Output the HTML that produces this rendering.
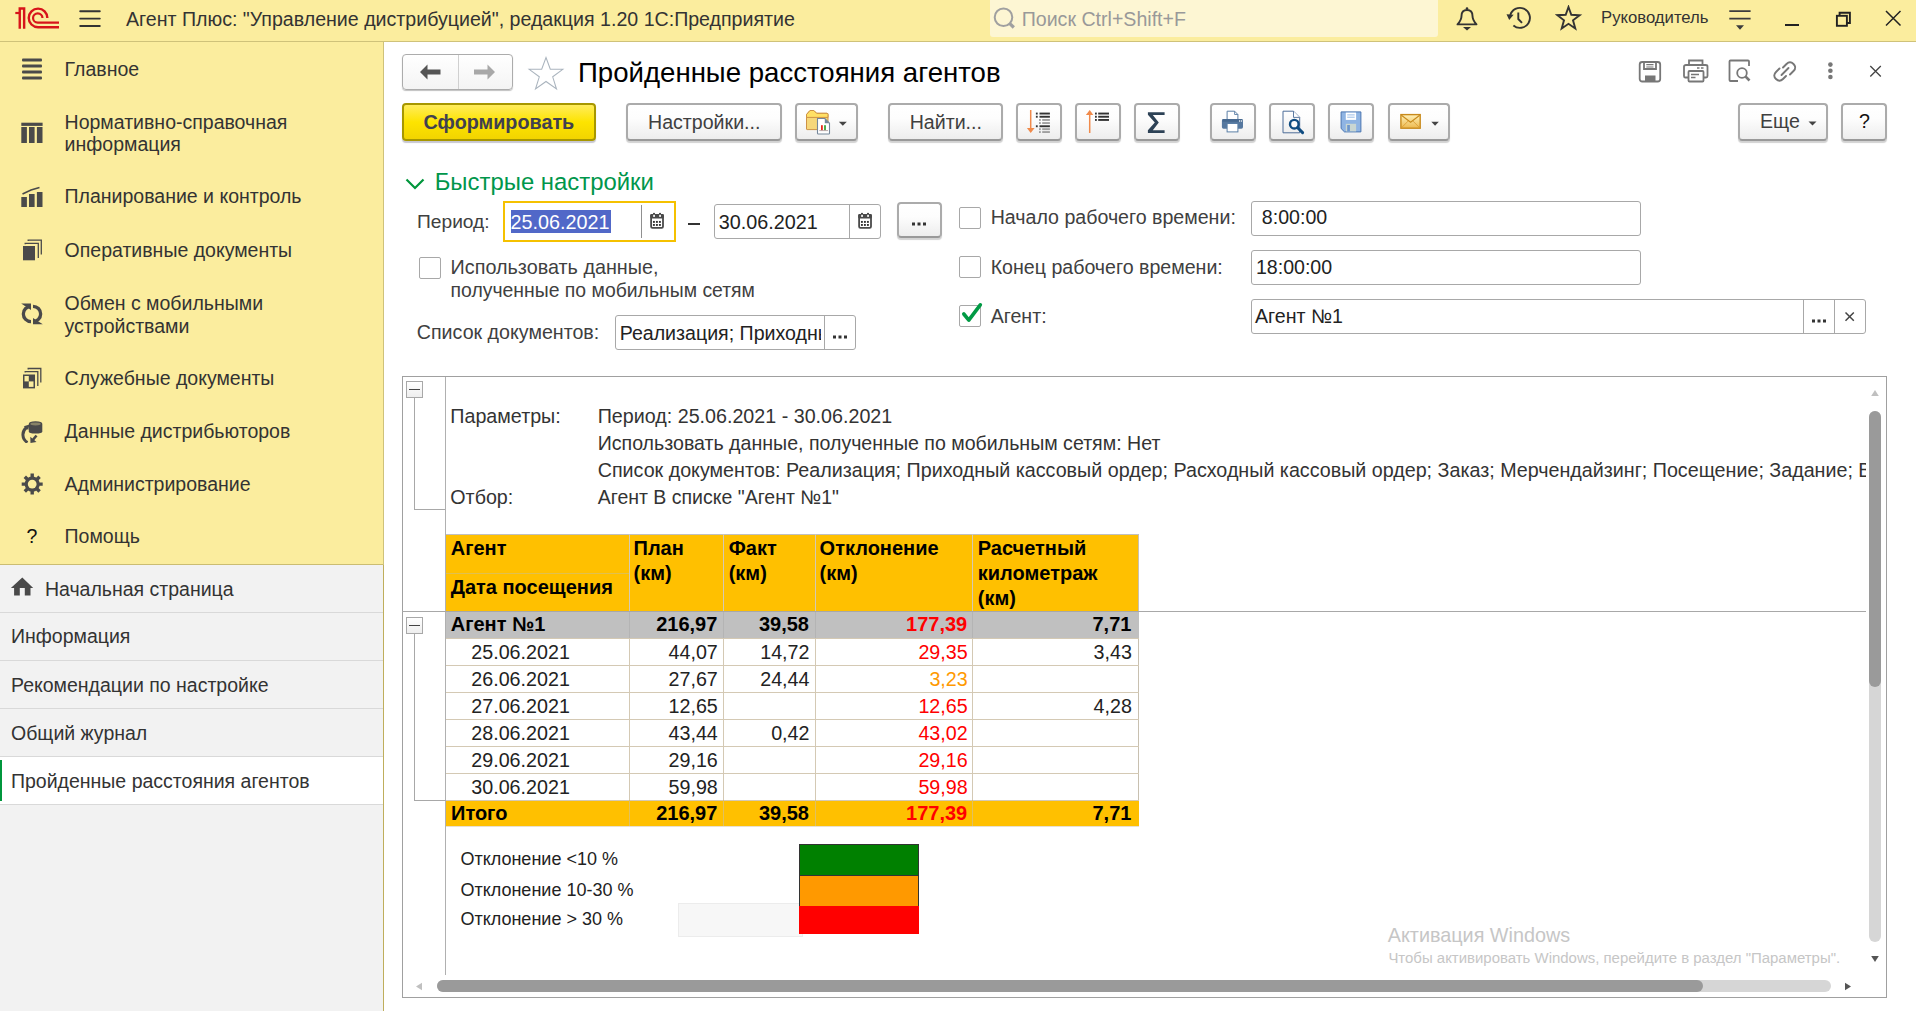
<!DOCTYPE html>
<html><head><meta charset="utf-8"><title>1C</title>
<style>
html,body{margin:0;padding:0;width:1916px;height:1011px;overflow:hidden;background:#fff;font-family:"Liberation Sans",sans-serif;}
.t{position:absolute;white-space:nowrap;}
.r{position:absolute;}
</style></head><body>
<div class="r" style="left:0px;top:0px;width:1916px;height:41px;background:#fbed9e"></div>
<div class="r" style="left:0px;top:41px;width:1916px;height:1px;background:#cfc27a"></div>
<svg class="r" style="left:12px;top:4px;" width="50" height="28" viewBox="0 0 50 28">
<g fill="none" stroke="#d7141a" stroke-width="2.4">
<path d="M7.75 24.8 V4.5 H12.15 V24.8" stroke-linejoin="miter"/>
<path d="M3.3 9 H7.75" stroke-width="2.2"/>
<path d="M35.35 13.95 A9.3 9.3 0 1 0 26.05 23.25 H47"/>
<path d="M30.45 14 A4.7 4.7 0 1 0 25.75 18.7 H47" stroke-width="2.2"/>
</g></svg>
<svg class="r" style="left:78px;top:9px;" width="24" height="20" viewBox="0 0 24 20"><g stroke="#333" stroke-width="1.9" stroke-linecap="round"><path d="M2.2 2.3H21.8M2.2 9.6H21.8M2.2 17H21.8"/></g></svg>
<div class="t" style="left:126.00px;top:7.84px;font-size:19.6px;line-height:22.54px;color:#333;font-weight:normal;">Агент Плюс: "Управление дистрибуцией", редакция 1.20 1С:Предприятие</div>
<div class="r" style="left:990px;top:0px;width:448px;height:37px;background:#fdf6d3;border-radius:0 0 3px 3px"></div>
<svg class="r" style="left:992px;top:6px;" width="26" height="26" viewBox="0 0 26 26"><g fill="none" stroke="#a0a0a0" stroke-width="2"><circle cx="11.5" cy="11.2" r="8.8"/></g><path d="M17.6 17.3 L21.8 21.5" stroke="#a0a0a0" stroke-width="3.2"/></svg>
<div class="t" style="left:1021.70px;top:7.74px;font-size:19.6px;line-height:22.54px;color:#999;font-weight:normal;">Поиск Ctrl+Shift+F</div>
<svg class="r" style="left:1454px;top:5px;" width="26" height="28" viewBox="0 0 26 28"><g fill="none" stroke="#333" stroke-width="1.9" stroke-linejoin="round">
<path d="M3.5 19.4 Q7.5 15 7.5 11 Q7.5 5 13 5 Q18.5 5 18.5 11 Q18.5 15 22.5 19.4 Z"/></g>
<circle cx="13" cy="3.5" r="1.3" fill="#333"/><path d="M9 22 H17 L13 25.5 Z" fill="#333"/></svg>
<svg class="r" style="left:1505px;top:5px;" width="28" height="28" viewBox="0 0 28 28"><g fill="none" stroke="#333" stroke-width="1.9"><path d="M8.4 20.5 A10 10 0 1 0 5.2 10.5"/><path d="M13.3 7.5 V14 L17 17.8"/></g>
<path d="M1.5 9.2 L8.6 9.8 L4.2 15 Z" fill="#333"/></svg>
<svg class="r" style="left:1555px;top:5px;" width="28" height="28" viewBox="0 0 28 28"><path d="M13.5 2 L16.3 9.8 L24.6 10.2 L18 15.3 L20.3 23.5 L13.5 18.8 L6.7 23.5 L9 15.3 L2.4 10.2 L10.7 9.8 Z" fill="none" stroke="#333" stroke-width="1.9" stroke-linejoin="miter"/></svg>
<div class="t" style="left:1601.00px;top:7.71px;font-size:16.7px;line-height:19.20px;color:#333;font-weight:normal;">Руководитель</div>
<svg class="r" style="left:1726px;top:8px;" width="28" height="24" viewBox="0 0 28 24"><g stroke="#3c3c3c" stroke-width="1.6"><path d="M3.3 3.1H24.6M3.3 10.6H24.6"/></g><path d="M10 17.3H18L14 21.7Z" fill="#3c3c3c"/></svg>
<div class="r" style="left:1785px;top:24px;width:14px;height:2px;background:#222"></div>
<svg class="r" style="left:1834px;top:10px;" width="20" height="20" viewBox="0 0 20 20"><g fill="none" stroke="#222" stroke-width="1.9"><rect x="2.9" y="5.8" width="10" height="10"/><path d="M5.6 5.8 V2.8 H15.9 V13 H12.9"/></g></svg>
<svg class="r" style="left:1884px;top:9px;" width="18" height="18" viewBox="0 0 18 18"><path d="M2 2 L16.5 16.5 M16.5 2 L2 16.5" stroke="#222" stroke-width="1.5"/></svg>
<div class="r" style="left:0px;top:42px;width:383px;height:522px;background:#fbed9e"></div>
<div class="r" style="left:383px;top:42px;width:1px;height:523px;background:#cfc27a"></div>
<div class="r" style="left:383px;top:565px;width:1px;height:446px;background:#bfae5c"></div>
<div class="r" style="left:0px;top:564px;width:383px;height:1px;background:#cbbd72"></div>
<div class="r" style="left:0px;top:565px;width:383px;height:446px;background:#f2f2f2"></div>
<svg class="r" style="left:20px;top:56px;" width="24" height="24" viewBox="0 0 24 24"><g fill="#4a4a4a"><rect x="2" y="2.5" width="20" height="3" rx="1"/><rect x="2" y="8.5" width="20" height="3" rx="1"/><rect x="2" y="14.5" width="20" height="3" rx="1"/><rect x="2" y="20.5" width="20" height="3" rx="1"/></g></svg>
<div class="t" style="left:64.60px;top:57.93px;font-size:19.5px;line-height:22.42px;color:#333;font-weight:normal;">Главное</div>
<svg class="r" style="left:20px;top:121px;" width="24" height="24" viewBox="0 0 24 24"><g fill="#4a4a4a"><rect x="1.3" y="1.7" width="21.3" height="3.2"/><rect x="1.3" y="6" width="5.6" height="16"/><rect x="9" y="6" width="5.6" height="16"/><rect x="16.9" y="6" width="5.6" height="16"/></g></svg>
<div class="t" style="left:64.60px;top:111.03px;font-size:19.5px;line-height:22.42px;color:#333;font-weight:normal;">Нормативно-справочная</div>
<div class="t" style="left:64.60px;top:133.03px;font-size:19.5px;line-height:22.42px;color:#333;font-weight:normal;">информация</div>
<svg class="r" style="left:20px;top:185px;" width="24" height="24" viewBox="0 0 24 24"><g fill="#4a4a4a"><rect x="1.3" y="12" width="5.6" height="10"/><rect x="9" y="9" width="5.6" height="13"/><rect x="16.9" y="7" width="5.6" height="15"/></g><path d="M2.5 9 L11 5 L19.5 2.5" stroke="#4a4a4a" stroke-width="1.6" fill="none"/></svg>
<div class="t" style="left:64.60px;top:185.33px;font-size:19.5px;line-height:22.42px;color:#333;font-weight:normal;">Планирование и контроль</div>
<svg class="r" style="left:20px;top:238px;" width="24" height="24" viewBox="0 0 24 24"><g fill="#4a4a4a"><rect x="3" y="8" width="12" height="14.3"/></g><g fill="none" stroke="#4a4a4a" stroke-width="1.3"><path d="M5.2 6.2 V5.3 H18.3 V20"/><path d="M8.2 3 V2.1 H21.3 V16.5"/></g></svg>
<div class="t" style="left:64.60px;top:239.03px;font-size:19.5px;line-height:22.42px;color:#333;font-weight:normal;">Оперативные документы</div>
<svg class="r" style="left:20px;top:302px;" width="24" height="24" viewBox="0 0 24 24"><g fill="none" stroke="#4a4a4a" stroke-width="3.3"><path d="M11 4.3 A7.6 7.6 0 0 0 11 19.6"/><path d="M13 19.6 A7.6 7.6 0 0 0 13 4.3"/></g><path d="M1.2 1.6 L11 1.6 L11 8 Z M22.8 22.3 L13 22.3 L13 16 Z" fill="#4a4a4a"/></svg>
<div class="t" style="left:64.60px;top:292.03px;font-size:19.5px;line-height:22.42px;color:#333;font-weight:normal;">Обмен с мобильными</div>
<div class="t" style="left:64.60px;top:314.63px;font-size:19.5px;line-height:22.42px;color:#333;font-weight:normal;">устройствами</div>
<svg class="r" style="left:20px;top:366px;" width="24" height="24" viewBox="0 0 24 24"><g fill="#4a4a4a"><rect x="3" y="8.5" width="12" height="13.9"/></g><g fill="#fbed9e"><rect x="4.5" y="10" width="4.3" height="5.4"/><rect x="8.8" y="15.4" width="4.7" height="5.5"/></g><g fill="none" stroke="#4a4a4a" stroke-width="1.3"><path d="M5.2 6.6 V5.7 H17.8 V20"/><path d="M8.2 3.4 V2.5 H20.8 V16.5"/></g></svg>
<div class="t" style="left:64.60px;top:366.73px;font-size:19.5px;line-height:22.42px;color:#333;font-weight:normal;">Служебные документы</div>
<svg class="r" style="left:18px;top:419px;" width="26" height="24" viewBox="0 0 26 24"><g fill="#4a4a4a"><path d="M10.8 5 Q10.8 2.2 17.5 2.2 Q24.3 2.2 24.3 5 V12.5 Q24.3 14.5 17.5 14.5 Q10.8 14.5 10.8 12.5 Z"/></g><ellipse cx="17.5" cy="5" rx="5.2" ry="1.4" fill="#fbed9e" opacity=".35"/><path d="M8.5 8.5 A9 9 0 0 0 9.5 23.5" stroke="#4a4a4a" stroke-width="3" fill="none"/><path d="M5.8 7.2 L11.5 5.5 L10.2 11 Z" fill="#4a4a4a"/><path d="M18.5 16.5 L14 22" stroke="#4a4a4a" stroke-width="2.6"/><path d="M12.3 17.8 L12.5 24 L18.5 23 Z" fill="#4a4a4a"/></svg>
<div class="t" style="left:64.60px;top:419.83px;font-size:19.5px;line-height:22.42px;color:#333;font-weight:normal;">Данные дистрибьюторов</div>
<svg class="r" style="left:20px;top:472px;" width="24" height="24" viewBox="0 0 24 24"><g stroke="#4a4a4a" stroke-width="3.4"><path d="M12.2 1.6V22.6M1.7 12.1H22.7M4.8 4.7L19.6 19.5M19.6 4.7L4.8 19.5"/></g><circle cx="12.2" cy="12.1" r="7.6" fill="#4a4a4a"/><circle cx="12.2" cy="12.1" r="4.4" fill="#fbed9e"/></svg>
<div class="t" style="left:64.60px;top:472.63px;font-size:19.5px;line-height:22.42px;color:#333;font-weight:normal;">Администрирование</div>
<div class="t" style="left:26.50px;top:525.43px;font-size:19.5px;line-height:22.42px;color:#111;font-weight:normal;">?</div>
<div class="t" style="left:64.60px;top:525.43px;font-size:19.5px;line-height:22.42px;color:#333;font-weight:normal;">Помощь</div>
<svg class="r" style="left:10px;top:574px;" width="24" height="24" viewBox="0 0 24 24"><path d="M12.3 3.6 L23.2 13.9 H20.5 V21.4 H14.8 V13.9 H9.8 V21.4 H4.1 V13.9 H0.9 Z" fill="#4a4a4a"/></svg>
<div class="t" style="left:44.90px;top:577.73px;font-size:19.5px;line-height:22.42px;color:#333;font-weight:normal;">Начальная страница</div>
<div class="r" style="left:0px;top:612px;width:383px;height:1px;background:#d9d9d9"></div>
<div class="t" style="left:11.00px;top:625.43px;font-size:19.5px;line-height:22.42px;color:#333;font-weight:normal;">Информация</div>
<div class="r" style="left:0px;top:660px;width:383px;height:1px;background:#d9d9d9"></div>
<div class="t" style="left:11.00px;top:673.73px;font-size:19.5px;line-height:22.42px;color:#333;font-weight:normal;">Рекомендации по настройке</div>
<div class="r" style="left:0px;top:708px;width:383px;height:1px;background:#d9d9d9"></div>
<div class="t" style="left:11.00px;top:721.83px;font-size:19.5px;line-height:22.42px;color:#333;font-weight:normal;">Общий журнал</div>
<div class="r" style="left:0px;top:756px;width:383px;height:1px;background:#d9d9d9"></div>
<div class="r" style="left:0px;top:757px;width:383px;height:47px;background:#fff"></div>
<div class="r" style="left:0px;top:760px;width:2px;height:41px;background:#00963c"></div>
<div class="t" style="left:11.00px;top:769.93px;font-size:19.5px;line-height:22.42px;color:#333;font-weight:normal;">Пройденные расстояния агентов</div>
<div class="r" style="left:0px;top:804px;width:383px;height:1px;background:#d9d9d9"></div>
<div class="r" style="left:402px;top:54px;width:111px;height:36px;border:1px solid #acacac;border-radius:4px;box-sizing:border-box;background:linear-gradient(#fff,#f4f4f4);box-shadow:0 1px 1px #c0c0c0"></div>
<div class="r" style="left:458px;top:55px;width:1px;height:34px;background:#d0d0d0"></div>
<svg class="r" style="left:418px;top:62px;" width="26" height="20" viewBox="0 0 26 20"><path d="M2 10 L9.5 2.5 L9.5 7.5 L22.5 7.5 L22.5 12.5 L9.5 12.5 L9.5 17.5 Z" fill="#555"/></svg>
<svg class="r" style="left:471px;top:62px;" width="26" height="20" viewBox="0 0 26 20"><path d="M24 10 L16.5 2.5 L16.5 7.5 L3 7.5 L3 12.5 L16.5 12.5 L16.5 17.5 Z" fill="#a8a8a8"/></svg>
<svg class="r" style="left:526px;top:55px;" width="40" height="36" viewBox="0 0 40 36"><path d="M20 2.5 L24.3 14.3 L36.8 14.3 L26.7 21.8 L30.5 34 L20 26.5 L9.5 34 L13.3 21.8 L3.2 14.3 L15.7 14.3 Z" fill="none" stroke="#aab4be" stroke-width="1.05"/></svg>
<div class="t" style="left:578.00px;top:56.57px;font-size:27.6px;line-height:31.74px;color:#000;font-weight:normal;">Пройденные расстояния агентов</div>
<svg class="r" style="left:1637px;top:59px;" width="26" height="25" viewBox="0 0 26 25"><g fill="none" stroke="#777" stroke-width="1.8"><rect x="2.7" y="3" width="20.5" height="19.5" rx="2.5"/><path d="M7 3 V10 H19 V3"/><path d="M9.3 5.6H16.5M9.3 8H16.5" stroke-width="1.2"/></g><rect x="8" y="16.5" width="10.5" height="6" fill="#777"/></svg>
<svg class="r" style="left:1682px;top:58px;" width="28" height="26" viewBox="0 0 28 26"><g fill="none" stroke="#777" stroke-width="1.8"><path d="M7 7 V2.5 H20.5 V7"/><path d="M6 19.5 H3 Q2 19.5 2 18 V8.5 Q2 7 4 7 H23.5 Q25.5 7 25.5 8.5 V18 Q25.5 19.5 24 19.5 H21.5"/><rect x="6.5" y="13" width="15" height="10.5" rx="1"/></g><path d="M9 16.5H17M9 19.5H13.5" stroke="#777" stroke-width="1.3"/><path d="M15 10H17.5M19 10H21.5" stroke="#777" stroke-width="1.3"/></svg>
<svg class="r" style="left:1727px;top:58px;" width="28" height="26" viewBox="0 0 28 26"><g fill="none" stroke="#777" stroke-width="1.8"><path d="M11 23 H3.5 Q2.5 23 2.5 22 V3.5 Q2.5 2.5 3.5 2.5 H21 Q22 2.5 22 3.5 V8"/><circle cx="15" cy="15" r="4.8"/></g><path d="M18.4 18.4 L22.5 22.5" stroke="#777" stroke-width="2.6"/></svg>
<svg class="r" style="left:1772px;top:58px;" width="28" height="26" viewBox="0 0 28 26"><g fill="none" stroke="#777" stroke-width="1.9" stroke-linecap="round"><path d="M11 9.5 L14.5 6 Q18 2.5 21.5 6 Q25 9.5 21.5 13 L18 16.5"/><path d="M14 18 L11 21 Q7.5 24.5 4 21 Q0.5 17.5 4 14 L7.5 10.5"/><path d="M9.5 17 L16.5 10"/></g></svg>
<svg class="r" style="left:1826px;top:60px;" width="10" height="22" viewBox="0 0 10 22"><g fill="#777"><circle cx="4.4" cy="4.6" r="2.3"/><circle cx="4.4" cy="10.8" r="2.3"/><circle cx="4.4" cy="17" r="2.3"/></g></svg>
<svg class="r" style="left:1868px;top:64px;" width="16" height="16" viewBox="0 0 16 16"><path d="M2.3 2 L12.8 12.5 M12.8 2 L2.3 12.5" stroke="#444" stroke-width="1.3"/></svg>
<div class="r" style="left:402px;top:103px;width:194px;height:38px;border:2px solid #a79700;border-radius:4px;box-sizing:border-box;background:linear-gradient(#ffec5c 0%,#fde400 50%,#f2d400 100%);box-shadow:0 2px 1px 0 #c7c7d0"></div>
<div class="t" style="left:423.60px;top:110.65px;font-size:19.8px;line-height:22.77px;color:#404050;font-weight:bold;">Сформировать</div>
<div class="r" style="left:626px;top:103px;width:156px;height:38px;border:2px solid #ababab;border-bottom-color:#999;border-radius:4px;box-sizing:border-box;background:linear-gradient(#ffffff 0%,#fdfdfd 40%,#ededed 100%);box-shadow:0 2px 1px 0 #d2d2d2;"></div>
<div class="t" style="left:648.00px;top:110.54px;font-size:19.6px;line-height:22.54px;color:#404040;font-weight:normal;">Настройки...</div>
<div class="r" style="left:795px;top:103px;width:63px;height:38px;border:2px solid #ababab;border-bottom-color:#999;border-radius:4px;box-sizing:border-box;background:linear-gradient(#ffffff 0%,#fdfdfd 40%,#ededed 100%);box-shadow:0 2px 1px 0 #d2d2d2;"></div>
<svg class="r" style="left:795px;top:100px;" width="40" height="40" viewBox="0 0 40 40"><path d="M11.5 14.5 L15 10.5 H18.8 L21.6 13.3 H32 Q33 13.3 33 14.5 V29 Q33 29.6 32.4 29.6 H12.1 Q11.5 29.6 11.5 29 Z" fill="#f6d77a" stroke="#cd9245" stroke-width="1"/><path d="M11.5 14.5 L15 10.5 H18.8 L21.6 13.3 H32 Q33 13.3 33 14.5 V17.4 H11.5 Z" fill="#ffe066" stroke="#cd9245" stroke-width="1"/><path d="M22.5 18.5 H29.8 L34.5 23.2 V33.2 Q34.5 34 33.7 34 H23.3 Q22.5 34 22.5 33.2 Z" fill="#fff" stroke="#75879a" stroke-width="1.1"/><path d="M29.8 18.5 V23.2 H34.5 Z" fill="#75879a"/><rect x="26" y="25.2" width="1.8" height="5" fill="#e8291c"/><rect x="29.1" y="25.2" width="1.8" height="5" fill="#3aa53a"/><path d="M24.3 30.6 H33" stroke="#a08888" stroke-width=".7"/></svg>
<svg class="r" style="left:838px;top:121px;" width="10" height="6" viewBox="0 0 10 6"><path d="M0.8 0.8 H8.8 L4.8 4.8 Z" fill="#444"/></svg>
<div class="r" style="left:888px;top:103px;width:115px;height:38px;border:2px solid #ababab;border-bottom-color:#999;border-radius:4px;box-sizing:border-box;background:linear-gradient(#ffffff 0%,#fdfdfd 40%,#ededed 100%);box-shadow:0 2px 1px 0 #d2d2d2;"></div>
<div class="t" style="left:909.70px;top:110.54px;font-size:19.6px;line-height:22.54px;color:#404040;font-weight:normal;">Найти...</div>
<div class="r" style="left:1016px;top:103px;width:46px;height:38px;border:2px solid #ababab;border-bottom-color:#999;border-radius:4px;box-sizing:border-box;background:linear-gradient(#ffffff 0%,#fdfdfd 40%,#ededed 100%);box-shadow:0 2px 1px 0 #d2d2d2;"></div>
<svg class="r" style="left:1016px;top:100px;" width="46" height="40" viewBox="0 0 46 40"><path d="M14.7 10 V29" stroke="#f08a4b" stroke-width="1.5"/><path d="M10.9 28 H18.6 L14.7 33 Z" fill="#f08a4b"/><rect x="19.9" y="12.6" width="1.8" height="1.9" fill="#333"/><rect x="23.5" y="12.6" width="10.4" height="1.9" fill="#333"/><rect x="19.9" y="15.8" width="1.8" height="1.9" fill="#333"/><rect x="23.5" y="15.8" width="10.4" height="1.9" fill="#333"/><rect x="19.9" y="25.3" width="1.8" height="1.9" fill="#333"/><rect x="23.5" y="25.3" width="10.4" height="1.9" fill="#333"/><rect x="23" y="19.0" width="1.8" height="1.9" fill="#a0a0a0"/><rect x="26.2" y="19.0" width="7.7" height="1.9" fill="#a0a0a0"/><rect x="23" y="22.1" width="1.8" height="1.9" fill="#a0a0a0"/><rect x="26.2" y="22.1" width="7.7" height="1.9" fill="#a0a0a0"/><rect x="23" y="28.2" width="1.8" height="1.9" fill="#a0a0a0"/><rect x="26.2" y="28.2" width="7.7" height="1.9" fill="#a0a0a0"/><rect x="23" y="31.1" width="1.8" height="1.9" fill="#a0a0a0"/><rect x="26.2" y="31.1" width="7.7" height="1.9" fill="#a0a0a0"/></svg>
<div class="r" style="left:1075px;top:103px;width:46px;height:38px;border:2px solid #ababab;border-bottom-color:#999;border-radius:4px;box-sizing:border-box;background:linear-gradient(#ffffff 0%,#fdfdfd 40%,#ededed 100%);box-shadow:0 2px 1px 0 #d2d2d2;"></div>
<svg class="r" style="left:1075px;top:100px;" width="46" height="40" viewBox="0 0 46 40"><path d="M14.7 13 V33" stroke="#f08a4b" stroke-width="1.5"/><path d="M10.9 15 H18.4 L14.7 9.9 Z" fill="#f08a4b"/><rect x="20" y="12.6" width="1.8" height="1.9" fill="#333"/><rect x="23.2" y="12.6" width="10.8" height="1.9" fill="#333"/><rect x="20" y="15.8" width="1.8" height="1.9" fill="#333"/><rect x="23.2" y="15.8" width="10.8" height="1.9" fill="#333"/><rect x="20" y="19.0" width="1.8" height="1.9" fill="#333"/><rect x="23.2" y="19.0" width="10.8" height="1.9" fill="#333"/></svg>
<div class="r" style="left:1134px;top:103px;width:46px;height:38px;border:2px solid #ababab;border-bottom-color:#999;border-radius:4px;box-sizing:border-box;background:linear-gradient(#ffffff 0%,#fdfdfd 40%,#ededed 100%);box-shadow:0 2px 1px 0 #d2d2d2;"></div>
<svg class="r" style="left:1134px;top:100px;" width="46" height="40" viewBox="0 0 46 40"><path d="M13.9 12.2 H30.6 V15 H18.8 L24.8 22.6 L18.8 30.2 H30.6 V33 H13.9 V30.3 L20.8 22.6 L13.9 14.8 Z" fill="#2d4256"/></svg>
<div class="r" style="left:1210px;top:103px;width:46px;height:38px;border:2px solid #ababab;border-bottom-color:#999;border-radius:4px;box-sizing:border-box;background:linear-gradient(#ffffff 0%,#fdfdfd 40%,#ededed 100%);box-shadow:0 2px 1px 0 #d2d2d2;"></div>
<svg class="r" style="left:1210px;top:100px;" width="46" height="40" viewBox="0 0 46 40"><path d="M17.1 19.5 V11.2 H24.6 L27.9 14.5 V19.5" fill="#fff" stroke="#5b7fa6" stroke-width="1"/><path d="M24.6 11.2 V14.5 H27.9" fill="none" stroke="#5b7fa6" stroke-width=".9"/><rect x="11.9" y="19.1" width="21.1" height="9.6" rx="1.6" fill="#56789f"/><rect x="12.5" y="19.1" width="19.9" height="2.6" fill="#46688f"/><rect x="17.1" y="23.5" width="10.8" height="8.4" fill="#fff" stroke="#5b7fa6" stroke-width="1"/><circle cx="29.6" cy="20.9" r=".75" fill="#fff"/><circle cx="31.5" cy="20.9" r=".75" fill="#fff"/></svg>
<div class="r" style="left:1269px;top:103px;width:46px;height:38px;border:2px solid #ababab;border-bottom-color:#999;border-radius:4px;box-sizing:border-box;background:linear-gradient(#ffffff 0%,#fdfdfd 40%,#ededed 100%);box-shadow:0 2px 1px 0 #d2d2d2;"></div>
<svg class="r" style="left:1269px;top:100px;" width="46" height="40" viewBox="0 0 46 40"><defs><linearGradient id="pg" x1="0" y1="0" x2="0" y2="1"><stop offset="0" stop-color="#fff"/><stop offset="1" stop-color="#eee"/></linearGradient></defs><path d="M14 11.2 H24.5 L30.7 17.4 V32.8 H14 Z" fill="url(#pg)" stroke="#4d6d98" stroke-width="1"/><path d="M24.5 11.2 V17.4 H30.7" fill="#fff" stroke="#4d6d98" stroke-width=".9"/><circle cx="25.3" cy="24.2" r="4.3" fill="#fff" fill-opacity=".6" stroke="#0f4c81" stroke-width="2.4"/><path d="M28.7 27.8 L33.6 32.6" stroke="#0f4c81" stroke-width="3" stroke-linecap="round"/></svg>
<div class="r" style="left:1328px;top:103px;width:46px;height:38px;border:2px solid #ababab;border-bottom-color:#999;border-radius:4px;box-sizing:border-box;background:linear-gradient(#ffffff 0%,#fdfdfd 40%,#ededed 100%);box-shadow:0 2px 1px 0 #d2d2d2;"></div>
<svg class="r" style="left:1328px;top:100px;" width="46" height="40" viewBox="0 0 46 40"><path d="M13.1 11.9 H32.9 V31.9 H16.5 L13.1 28.5 Z" fill="#8fb4e3" stroke="#4a76b0" stroke-width="1"/><rect x="17.8" y="12.6" width="10.3" height="7.3" fill="#fff"/><path d="M19.2 14.9 H26.7 M19.2 17.2 H26.7" stroke="#8fb4e3" stroke-width=".9"/><rect x="17.8" y="23.8" width="10.3" height="7.6" fill="#c9d6d2"/><rect x="19.2" y="25" width="2.7" height="6.4" fill="#6d96cc"/></svg>
<div class="r" style="left:1388px;top:103px;width:62px;height:38px;border:2px solid #ababab;border-bottom-color:#999;border-radius:4px;box-sizing:border-box;background:linear-gradient(#ffffff 0%,#fdfdfd 40%,#ededed 100%);box-shadow:0 2px 1px 0 #d2d2d2;"></div>
<svg class="r" style="left:1388px;top:100px;" width="46" height="40" viewBox="0 0 46 40"><defs><linearGradient id="mg" x1="0" y1="0" x2="0" y2="1"><stop offset="0" stop-color="#fff1b8"/><stop offset="1" stop-color="#ecb94f"/></linearGradient></defs><rect x="12.9" y="14.6" width="19.3" height="13.6" fill="url(#mg)" stroke="#c88a1c" stroke-width="1.4"/><path d="M13.4 15.2 L22.6 22.2 L31.7 15.2" fill="none" stroke="#c88a1c" stroke-width="1.1"/><path d="M13.4 27.8 L20.2 21 M31.7 27.8 L24.9 21" stroke="#d99a30" stroke-width=".8"/></svg>
<svg class="r" style="left:1431px;top:121px;" width="9" height="6" viewBox="0 0 9 6"><path d="M0.3 0.8 H7.8 L4.05 4.8 Z" fill="#444"/></svg>
<div class="r" style="left:1738px;top:103px;width:90px;height:38px;border:2px solid #ababab;border-bottom-color:#999;border-radius:4px;box-sizing:border-box;background:linear-gradient(#ffffff 0%,#fdfdfd 40%,#ededed 100%);box-shadow:0 2px 1px 0 #d2d2d2;"></div>
<div class="t" style="left:1760.00px;top:109.94px;font-size:19.6px;line-height:22.54px;color:#404040;font-weight:normal;">Еще</div>
<svg class="r" style="left:1807px;top:120px;" width="12" height="8" viewBox="0 0 12 8"><path d="M1.5 1.5 H9.5 L5.5 5.5 Z" fill="#444"/></svg>
<div class="r" style="left:1841px;top:103px;width:46px;height:38px;border:2px solid #ababab;border-bottom-color:#999;border-radius:4px;box-sizing:border-box;background:linear-gradient(#ffffff 0%,#fdfdfd 40%,#ededed 100%);box-shadow:0 2px 1px 0 #d2d2d2;"></div>
<div class="t" style="left:1859.00px;top:110.14px;font-size:19.6px;line-height:22.54px;color:#111;font-weight:normal;">?</div>
<svg class="r" style="left:403px;top:176px;" width="24" height="16" viewBox="0 0 24 16"><path d="M3.5 3.5 L12 12 L20.5 3.5" fill="none" stroke="#00963c" stroke-width="2.2"/></svg>
<div class="t" style="left:434.70px;top:167.68px;font-size:23.9px;line-height:27.48px;color:#00964b;font-weight:normal;">Быстрые настройки</div>
<div class="t" style="left:417.00px;top:210.91px;font-size:19.2px;line-height:22.08px;color:#404040;font-weight:normal;">Период:</div>
<div class="r" style="left:503px;top:201px;width:173px;height:41px;border:2px solid #f5c100;box-sizing:border-box;background:#fff"></div>
<div class="r" style="left:511px;top:210px;width:100px;height:23px;background:#5168c8"></div>
<div class="t" style="left:510.50px;top:210.95px;font-size:19.8px;line-height:22.77px;color:#fff;font-weight:normal;">25.06.2021</div>
<div class="r" style="left:641px;top:205px;width:1px;height:33px;background:#909090"></div>
<svg class="r" style="left:650px;top:212px;" width="16" height="18" viewBox="0 0 16 18"><rect x="1.1" y="2.9" width="11.9" height="12.9" rx="1.3" fill="#fff" stroke="#4a4a4a" stroke-width="1.8"/><rect x="0.2" y="2" width="13.7" height="4.4" rx="1.3" fill="#4a4a4a"/><rect x="3" y="0.9" width="2" height="2" fill="#4a4a4a"/><rect x="9" y="0.9" width="2" height="2" fill="#4a4a4a"/><rect x="3.2" y="2.8" width="1.7" height="2.1" fill="#fff"/><rect x="9.2" y="2.8" width="1.7" height="2.1" fill="#fff"/><rect x="2.95" y="8.95" width="1.9" height="1.9" fill="#333"/><rect x="5.95" y="8.95" width="1.9" height="1.9" fill="#333"/><rect x="8.95" y="8.95" width="1.9" height="1.9" fill="#333"/><rect x="2.95" y="12.00" width="1.9" height="1.9" fill="#333"/><rect x="5.95" y="12.00" width="1.9" height="1.9" fill="#333"/><rect x="8.95" y="12.00" width="1.9" height="1.9" fill="#333"/></svg>
<div class="r" style="left:688px;top:223px;width:12px;height:2px;background:#333"></div>
<div class="r" style="left:714px;top:204px;width:167px;height:35px;border:1px solid #a8a8a8;border-radius:3px;box-sizing:border-box;background:#fff"></div>
<div class="r" style="left:849px;top:205px;width:1px;height:33px;background:#a8a8a8"></div>
<div class="t" style="left:718.70px;top:210.95px;font-size:19.8px;line-height:22.77px;color:#222;font-weight:normal;">30.06.2021</div>
<svg class="r" style="left:858px;top:212px;" width="16" height="18" viewBox="0 0 16 18"><rect x="1.1" y="2.9" width="11.9" height="12.9" rx="1.3" fill="#fff" stroke="#4a4a4a" stroke-width="1.8"/><rect x="0.2" y="2" width="13.7" height="4.4" rx="1.3" fill="#4a4a4a"/><rect x="3" y="0.9" width="2" height="2" fill="#4a4a4a"/><rect x="9" y="0.9" width="2" height="2" fill="#4a4a4a"/><rect x="3.2" y="2.8" width="1.7" height="2.1" fill="#fff"/><rect x="9.2" y="2.8" width="1.7" height="2.1" fill="#fff"/><rect x="2.95" y="8.95" width="1.9" height="1.9" fill="#333"/><rect x="5.95" y="8.95" width="1.9" height="1.9" fill="#333"/><rect x="8.95" y="8.95" width="1.9" height="1.9" fill="#333"/><rect x="2.95" y="12.00" width="1.9" height="1.9" fill="#333"/><rect x="5.95" y="12.00" width="1.9" height="1.9" fill="#333"/><rect x="8.95" y="12.00" width="1.9" height="1.9" fill="#333"/></svg>
<div class="r" style="left:897px;top:202px;width:45px;height:36px;border:2px solid #ababab;border-bottom-color:#999;border-radius:4px;box-sizing:border-box;background:linear-gradient(#ffffff 0%,#fdfdfd 40%,#ededed 100%);box-shadow:0 2px 1px 0 #d2d2d2;"></div>
<svg class="r" style="left:910px;top:221px;" width="18" height="6" viewBox="0 0 18 6"><g fill="#333"><rect x="2" y="1.5" width="3" height="3"/><rect x="7.5" y="1.5" width="3" height="3"/><rect x="13" y="1.5" width="3" height="3"/></g></svg>
<div class="r" style="left:419px;top:257px;width:22px;height:22px;border:1px solid #a8a8a8;border-radius:2px;box-sizing:border-box;background:#fff"></div>
<div class="t" style="left:450.60px;top:255.75px;font-size:19.8px;line-height:22.77px;color:#404040;font-weight:normal;">Использовать данные,</div>
<div class="t" style="left:450.60px;top:278.72px;font-size:19.4px;line-height:22.31px;color:#404040;font-weight:normal;">полученные по мобильным сетям</div>
<div class="t" style="left:416.80px;top:321.19px;font-size:19.65px;line-height:22.60px;color:#404040;font-weight:normal;">Список документов:</div>
<div class="r" style="left:615px;top:315px;width:241px;height:35px;border:1px solid #a8a8a8;border-radius:3px;box-sizing:border-box;background:#fff"></div>
<div class="r" style="left:616px;top:316px;width:205px;height:33px;overflow:hidden">
<div class="t" style="left:3.70px;top:5.74px;font-size:19.6px;line-height:22.54px;color:#222;font-weight:normal;">Реализация; Приходный кассовый ордер</div>
</div>
<div class="r" style="left:824px;top:316px;width:1px;height:33px;background:#a8a8a8"></div>
<svg class="r" style="left:831px;top:334px;" width="18" height="6" viewBox="0 0 18 6"><g fill="#333"><rect x="2" y="1.5" width="3" height="3"/><rect x="7.5" y="1.5" width="3" height="3"/><rect x="13" y="1.5" width="3" height="3"/></g></svg>
<div class="r" style="left:959px;top:207px;width:22px;height:22px;border:1px solid #a8a8a8;border-radius:2px;box-sizing:border-box;background:#fff"></div>
<div class="t" style="left:990.70px;top:206.14px;font-size:19.6px;line-height:22.54px;color:#404040;font-weight:normal;">Начало рабочего времени:</div>
<div class="r" style="left:1251px;top:201px;width:390px;height:35px;border:1px solid #a8a8a8;border-radius:3px;box-sizing:border-box;background:#fff"></div>
<div class="t" style="left:1261.80px;top:206.14px;font-size:19.6px;line-height:22.54px;color:#222;font-weight:normal;">8:00:00</div>
<div class="r" style="left:959px;top:256px;width:22px;height:22px;border:1px solid #a8a8a8;border-radius:2px;box-sizing:border-box;background:#fff"></div>
<div class="t" style="left:990.70px;top:255.54px;font-size:19.6px;line-height:22.54px;color:#404040;font-weight:normal;">Конец рабочего времени:</div>
<div class="r" style="left:1251px;top:250px;width:390px;height:35px;border:1px solid #a8a8a8;border-radius:3px;box-sizing:border-box;background:#fff"></div>
<div class="t" style="left:1255.90px;top:255.54px;font-size:19.6px;line-height:22.54px;color:#222;font-weight:normal;">18:00:00</div>
<div class="r" style="left:959px;top:305px;width:22px;height:22px;border:1px solid #a8a8a8;border-radius:2px;box-sizing:border-box;background:#fff"></div>
<svg class="r" style="left:958px;top:300px;" width="28" height="26" viewBox="0 0 28 26"><path d="M5.8 14 L10.8 20.1 L22.3 4.8" fill="none" stroke="#009a44" stroke-width="3.6" stroke-linecap="round" stroke-linejoin="round"/></svg>
<div class="t" style="left:990.70px;top:304.84px;font-size:19.6px;line-height:22.54px;color:#404040;font-weight:normal;">Агент:</div>
<div class="r" style="left:1251px;top:299px;width:615px;height:35px;border:1px solid #a8a8a8;border-radius:3px;box-sizing:border-box;background:#fff"></div>
<div class="t" style="left:1255.00px;top:304.84px;font-size:19.6px;line-height:22.54px;color:#222;font-weight:normal;">Агент №1</div>
<div class="r" style="left:1803px;top:300px;width:1px;height:33px;background:#a8a8a8"></div>
<div class="r" style="left:1834px;top:300px;width:1px;height:33px;background:#a8a8a8"></div>
<svg class="r" style="left:1810px;top:318px;" width="18" height="6" viewBox="0 0 18 6"><g fill="#333"><rect x="2" y="1.5" width="3" height="3"/><rect x="7.5" y="1.5" width="3" height="3"/><rect x="13" y="1.5" width="3" height="3"/></g></svg>
<svg class="r" style="left:1843px;top:310px;" width="14" height="14" viewBox="0 0 14 14"><path d="M2.5 2.5 L10.8 10.8 M10.8 2.5 L2.5 10.8" stroke="#444" stroke-width="1.5"/></svg>
<div class="r" style="left:402px;top:376px;width:1485px;height:622px;border:1px solid #a0a0a0;box-sizing:border-box;background:#fff"></div>
<div class="r" style="left:406px;top:381px;width:17px;height:17px;border:1px solid #a8a8a8;box-sizing:border-box;background:linear-gradient(#fff,#eee)"></div>
<div class="r" style="left:409px;top:389px;width:11px;height:1px;background:#444"></div>
<div class="r" style="left:414px;top:398px;width:1px;height:111px;background:#a8a8a8"></div>
<div class="r" style="left:414px;top:509px;width:32px;height:1px;background:#a8a8a8"></div>
<div class="r" style="left:445px;top:377px;width:1px;height:598px;background:#b0b0b0"></div>
<div class="t" style="left:450.30px;top:404.75px;font-size:19.7px;line-height:22.65px;color:#333;font-weight:normal;">Параметры:</div>
<div class="t" style="left:597.70px;top:404.75px;font-size:19.7px;line-height:22.65px;color:#333;font-weight:normal;">Период: 25.06.2021 - 30.06.2021</div>
<div class="t" style="left:597.70px;top:431.86px;font-size:19.58px;line-height:22.52px;color:#333;font-weight:normal;">Использовать данные, полученные по мобильным сетям: Нет</div>
<div class="r" style="left:446px;top:455px;width:1420px;height:27px;overflow:hidden">
<div class="t" style="left:151.70px;top:3.65px;font-size:19.7px;line-height:22.65px;color:#333;font-weight:normal;">Список документов: Реализация; Приходный кассовый ордер; Расходный кассовый ордер; Заказ; Мерчендайзинг; Посещение; Задание; Возврат</div>
</div>
<div class="t" style="left:450.30px;top:485.55px;font-size:19.7px;line-height:22.65px;color:#333;font-weight:normal;">Отбор:</div>
<div class="t" style="left:597.70px;top:485.73px;font-size:19.5px;line-height:22.42px;color:#333;font-weight:normal;">Агент В списке "Агент №1"</div>
<div class="r" style="left:446px;top:534px;width:693px;height:77px;background:#ffc000"></div>
<div class="r" style="left:446px;top:534px;width:693px;height:1px;background:#c0c0c0"></div>
<div class="r" style="left:446px;top:573px;width:183px;height:1px;background:#e0c050"></div>
<div class="r" style="left:629px;top:534px;width:1px;height:293px;background:#d4c9b4"></div>
<div class="r" style="left:723px;top:534px;width:1px;height:293px;background:#d4c9b4"></div>
<div class="r" style="left:815px;top:534px;width:1px;height:293px;background:#d4c9b4"></div>
<div class="r" style="left:972px;top:534px;width:1px;height:293px;background:#d4c9b4"></div>
<div class="r" style="left:1138px;top:534px;width:1px;height:293px;background:#c8c0b0"></div>
<div class="r" style="left:402px;top:611px;width:1464px;height:1px;background:#a8a8a8"></div>
<div class="t" style="left:450.70px;top:537.07px;font-size:20px;line-height:23.00px;color:#000;font-weight:bold;">Агент</div>
<div class="t" style="left:450.70px;top:576.17px;font-size:20px;line-height:23.00px;color:#000;font-weight:bold;">Дата посещения</div>
<div class="t" style="left:633.50px;top:537.07px;font-size:20px;line-height:23.00px;color:#000;font-weight:bold;">План</div>
<div class="t" style="left:633.50px;top:562.07px;font-size:20px;line-height:23.00px;color:#000;font-weight:bold;">(км)</div>
<div class="t" style="left:728.70px;top:537.07px;font-size:20px;line-height:23.00px;color:#000;font-weight:bold;">Факт</div>
<div class="t" style="left:728.70px;top:562.07px;font-size:20px;line-height:23.00px;color:#000;font-weight:bold;">(км)</div>
<div class="t" style="left:819.60px;top:537.07px;font-size:20px;line-height:23.00px;color:#000;font-weight:bold;">Отклонение</div>
<div class="t" style="left:819.60px;top:562.07px;font-size:20px;line-height:23.00px;color:#000;font-weight:bold;">(км)</div>
<div class="t" style="left:977.80px;top:537.07px;font-size:20px;line-height:23.00px;color:#000;font-weight:bold;">Расчетный</div>
<div class="t" style="left:977.80px;top:562.07px;font-size:20px;line-height:23.00px;color:#000;font-weight:bold;">километраж</div>
<div class="t" style="left:977.80px;top:587.07px;font-size:20px;line-height:23.00px;color:#000;font-weight:bold;">(км)</div>
<div class="r" style="left:446px;top:612px;width:693px;height:26px;background:#c0c0c0"></div>
<div class="r" style="left:629px;top:612px;width:1px;height:26px;background:#b4b4b4"></div>
<div class="r" style="left:723px;top:612px;width:1px;height:26px;background:#b4b4b4"></div>
<div class="r" style="left:815px;top:612px;width:1px;height:26px;background:#b4b4b4"></div>
<div class="r" style="left:972px;top:612px;width:1px;height:26px;background:#b4b4b4"></div>
<div class="r" style="left:406px;top:617px;width:17px;height:17px;border:1px solid #a8a8a8;box-sizing:border-box;background:linear-gradient(#fff,#eee)"></div>
<div class="r" style="left:409px;top:625px;width:11px;height:1px;background:#444"></div>
<div class="r" style="left:414px;top:634px;width:1px;height:166px;background:#a8a8a8"></div>
<div class="r" style="left:414px;top:800px;width:32px;height:1px;background:#a8a8a8"></div>
<div class="t" style="left:450.70px;top:613.07px;font-size:20px;line-height:23.00px;color:#000;font-weight:bold;">Агент №1</div>
<div class="t" style="right:1198.70px;top:613.07px;font-size:20px;line-height:23.00px;color:#000;font-weight:bold;text-align:right;">216,97</div>
<div class="t" style="right:1107.00px;top:613.07px;font-size:20px;line-height:23.00px;color:#000;font-weight:bold;text-align:right;">39,58</div>
<div class="t" style="right:948.80px;top:613.07px;font-size:20px;line-height:23.00px;color:#f00;font-weight:bold;text-align:right;">177,39</div>
<div class="t" style="right:784.60px;top:613.07px;font-size:20px;line-height:23.00px;color:#000;font-weight:bold;text-align:right;">7,71</div>
<div class="r" style="left:446px;top:638px;width:693px;height:1px;background:#d4c9b4"></div>
<div class="t" style="left:471.30px;top:640.85px;font-size:19.7px;line-height:22.65px;color:#222;font-weight:normal;">25.06.2021</div>
<div class="t" style="right:1198.20px;top:640.85px;font-size:19.7px;line-height:22.65px;color:#222;font-weight:normal;text-align:right;">44,07</div>
<div class="t" style="right:1106.50px;top:640.85px;font-size:19.7px;line-height:22.65px;color:#222;font-weight:normal;text-align:right;">14,72</div>
<div class="t" style="right:948.30px;top:640.85px;font-size:19.7px;line-height:22.65px;color:#f00;font-weight:normal;text-align:right;">29,35</div>
<div class="t" style="right:784.10px;top:640.85px;font-size:19.7px;line-height:22.65px;color:#222;font-weight:normal;text-align:right;">3,43</div>
<div class="r" style="left:446px;top:665px;width:693px;height:1px;background:#d4c9b4"></div>
<div class="t" style="left:471.30px;top:667.85px;font-size:19.7px;line-height:22.65px;color:#222;font-weight:normal;">26.06.2021</div>
<div class="t" style="right:1198.20px;top:667.85px;font-size:19.7px;line-height:22.65px;color:#222;font-weight:normal;text-align:right;">27,67</div>
<div class="t" style="right:1106.50px;top:667.85px;font-size:19.7px;line-height:22.65px;color:#222;font-weight:normal;text-align:right;">24,44</div>
<div class="t" style="right:948.30px;top:667.85px;font-size:19.7px;line-height:22.65px;color:#f90;font-weight:normal;text-align:right;">3,23</div>
<div class="r" style="left:446px;top:692px;width:693px;height:1px;background:#d4c9b4"></div>
<div class="t" style="left:471.30px;top:694.85px;font-size:19.7px;line-height:22.65px;color:#222;font-weight:normal;">27.06.2021</div>
<div class="t" style="right:1198.20px;top:694.85px;font-size:19.7px;line-height:22.65px;color:#222;font-weight:normal;text-align:right;">12,65</div>
<div class="t" style="right:948.30px;top:694.85px;font-size:19.7px;line-height:22.65px;color:#f00;font-weight:normal;text-align:right;">12,65</div>
<div class="t" style="right:784.10px;top:694.85px;font-size:19.7px;line-height:22.65px;color:#222;font-weight:normal;text-align:right;">4,28</div>
<div class="r" style="left:446px;top:719px;width:693px;height:1px;background:#d4c9b4"></div>
<div class="t" style="left:471.30px;top:721.85px;font-size:19.7px;line-height:22.65px;color:#222;font-weight:normal;">28.06.2021</div>
<div class="t" style="right:1198.20px;top:721.85px;font-size:19.7px;line-height:22.65px;color:#222;font-weight:normal;text-align:right;">43,44</div>
<div class="t" style="right:1106.50px;top:721.85px;font-size:19.7px;line-height:22.65px;color:#222;font-weight:normal;text-align:right;">0,42</div>
<div class="t" style="right:948.30px;top:721.85px;font-size:19.7px;line-height:22.65px;color:#f00;font-weight:normal;text-align:right;">43,02</div>
<div class="r" style="left:446px;top:746px;width:693px;height:1px;background:#d4c9b4"></div>
<div class="t" style="left:471.30px;top:748.85px;font-size:19.7px;line-height:22.65px;color:#222;font-weight:normal;">29.06.2021</div>
<div class="t" style="right:1198.20px;top:748.85px;font-size:19.7px;line-height:22.65px;color:#222;font-weight:normal;text-align:right;">29,16</div>
<div class="t" style="right:948.30px;top:748.85px;font-size:19.7px;line-height:22.65px;color:#f00;font-weight:normal;text-align:right;">29,16</div>
<div class="r" style="left:446px;top:773px;width:693px;height:1px;background:#d4c9b4"></div>
<div class="t" style="left:471.30px;top:775.85px;font-size:19.7px;line-height:22.65px;color:#222;font-weight:normal;">30.06.2021</div>
<div class="t" style="right:1198.20px;top:775.85px;font-size:19.7px;line-height:22.65px;color:#222;font-weight:normal;text-align:right;">59,98</div>
<div class="t" style="right:948.30px;top:775.85px;font-size:19.7px;line-height:22.65px;color:#f00;font-weight:normal;text-align:right;">59,98</div>
<div class="r" style="left:446px;top:800px;width:693px;height:27px;background:#ffc000"></div>
<div class="r" style="left:446px;top:800px;width:693px;height:1px;background:#d4c9b4"></div>
<div class="r" style="left:629px;top:800px;width:1px;height:27px;background:#e0c060"></div>
<div class="r" style="left:723px;top:800px;width:1px;height:27px;background:#e0c060"></div>
<div class="r" style="left:815px;top:800px;width:1px;height:27px;background:#e0c060"></div>
<div class="r" style="left:972px;top:800px;width:1px;height:27px;background:#e0c060"></div>
<div class="t" style="left:451.00px;top:801.57px;font-size:20px;line-height:23.00px;color:#000;font-weight:bold;">Итого</div>
<div class="t" style="right:1198.70px;top:801.57px;font-size:20px;line-height:23.00px;color:#000;font-weight:bold;text-align:right;">216,97</div>
<div class="t" style="right:1107.00px;top:801.57px;font-size:20px;line-height:23.00px;color:#000;font-weight:bold;text-align:right;">39,58</div>
<div class="t" style="right:948.80px;top:801.57px;font-size:20px;line-height:23.00px;color:#f00;font-weight:bold;text-align:right;">177,39</div>
<div class="t" style="right:784.60px;top:801.57px;font-size:20px;line-height:23.00px;color:#000;font-weight:bold;text-align:right;">7,71</div>
<div class="r" style="left:446px;top:826px;width:693px;height:1px;background:#e8e0d0"></div>
<div class="t" style="left:460.40px;top:848.61px;font-size:18px;line-height:20.70px;color:#222;font-weight:normal;">Отклонение &lt;10 %</div>
<div class="t" style="left:460.40px;top:879.91px;font-size:18px;line-height:20.70px;color:#222;font-weight:normal;">Отклонение 10-30 %</div>
<div class="t" style="left:460.40px;top:908.61px;font-size:18px;line-height:20.70px;color:#222;font-weight:normal;">Отклонение &gt; 30 %</div>
<div class="r" style="left:678px;top:903px;width:125px;height:34px;background:#f7f7f7;border:1px solid #ececec;box-sizing:border-box"></div>
<div class="r" style="left:799px;top:844px;width:120px;height:32px;background:#008000;border:1px solid #333;box-sizing:border-box"></div>
<div class="r" style="left:799px;top:875px;width:120px;height:32px;background:#f90;border:1px solid #333;box-sizing:border-box"></div>
<div class="r" style="left:799px;top:906px;width:120px;height:28px;background:#f00"></div>
<div class="t" style="left:1387.80px;top:923.65px;font-size:19.8px;line-height:22.77px;color:#c6c6c6;font-weight:normal;">Активация Windows</div>
<div class="t" style="left:1388.40px;top:949.11px;font-size:14.96px;line-height:17.20px;color:#c6c6c6;font-weight:normal;">Чтобы активировать Windows, перейдите в раздел "Параметры".</div>
<div class="r" style="left:1869px;top:411px;width:12px;height:531px;background:#d6d6d6;border-radius:6px"></div>
<div class="r" style="left:1869px;top:411px;width:12px;height:276px;background:#9a9a9a;border-radius:6px"></div>
<svg class="r" style="left:1870px;top:388px;" width="10" height="10" viewBox="0 0 10 10"><path d="M5 2 L8.8 8 H1.2 Z" fill="#c0c0c0"/></svg>
<svg class="r" style="left:1870px;top:954px;" width="10" height="10" viewBox="0 0 10 10"><path d="M5 8 L8.8 2 H1.2 Z" fill="#555"/></svg>
<div class="r" style="left:437px;top:980px;width:1394px;height:12px;background:#d6d6d6;border-radius:6px"></div>
<div class="r" style="left:437px;top:980px;width:1266px;height:12px;background:#9a9a9a;border-radius:6px"></div>
<svg class="r" style="left:414px;top:981px;" width="10" height="11" viewBox="0 0 10 11"><path d="M2 5.5 L8 1.8 V9.2 Z" fill="#c0c0c0"/></svg>
<svg class="r" style="left:1843px;top:981px;" width="10" height="11" viewBox="0 0 10 11"><path d="M8 5.5 L2 1.8 V9.2 Z" fill="#555"/></svg>
</body></html>
